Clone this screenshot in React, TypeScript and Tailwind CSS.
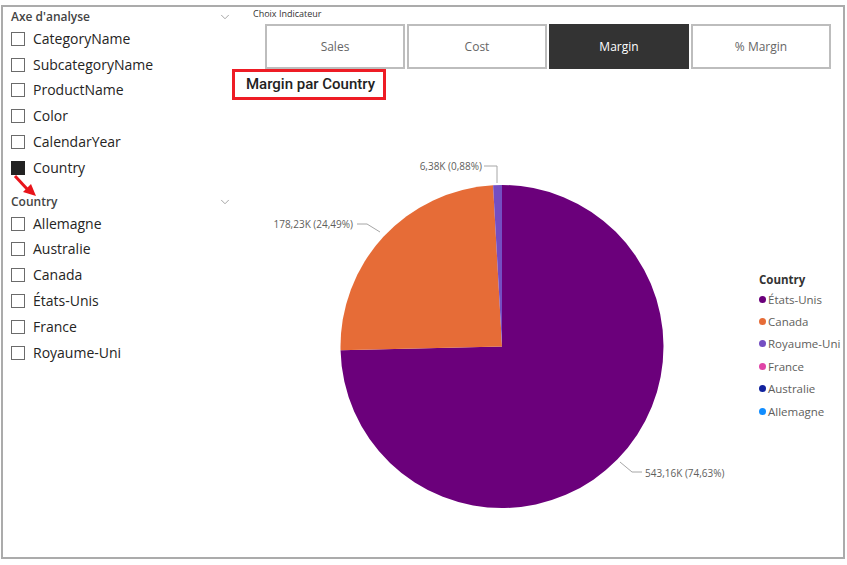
import { ChevronDown } from 'lucide-react';

const axes = ['CategoryName', 'SubcategoryName', 'ProductName', 'Color', 'CalendarYear', 'Country'];
const countries = ['Allemagne', 'Australie', 'Canada', 'États-Unis', 'France', 'Royaume-Uni'];
const indicators = ['Sales', 'Cost', 'Margin', '% Margin'];

const legend = [
    { name: 'États-Unis', color: '#6B007B' },
    { name: 'Canada', color: '#E66C37' },
    { name: 'Royaume-Uni', color: '#744EC2' },
    { name: 'France', color: '#E044A7' },
    { name: 'Australie', color: '#12239E' },
    { name: 'Allemagne', color: '#118DFF' },
];

function CheckRow({ label, checked }: { label: string; checked?: boolean }) {
    return (
        <div className="h-[25.8px] flex items-center gap-2">
            <span
                className={
                    checked
                        ? 'w-[14px] h-[14px] bg-[#222] border border-[#222]'
                        : 'w-[14px] h-[14px] border border-[#6b6b6b] bg-white'
                }
            />
            <span className="text-[14px] text-[#252423] leading-none">{label}</span>
        </div>
    );
}

function SlicerHeader({ title }: { title: string }) {
    return (
        <div className="h-[18px] flex items-center justify-between">
            <span className="text-[12px] font-semibold text-[#444]">{title}</span>
            <ChevronDown size={14} strokeWidth={1.3} className="text-[#8a8a8a]" />
        </div>
    );
}

function PieChart() {
    return (
        <svg width="526" height="456" viewBox="0 0 526 456" className="shrink-0">
            <path d="M270,246.5 L270,85 A161.5,161.5 0 1 1 108.54,250.25 Z" fill="#6B007B" />
            <path d="M270,246.5 L108.54,250.25 A161.5,161.5 0 0 1 261.07,85.25 Z" fill="#E66C37" />
            <path d="M270,246.5 L261.07,85.25 A161.5,161.5 0 0 1 270,85 Z" fill="#744EC2" />

            <g fill="none" stroke="#a6a6a6" strokeWidth="1">
                <polyline points="252,66 265,66 265,83" />
                <polyline points="125,124 135,124 148,132" />
                <polyline points="388,362 400,372 410,372" />
            </g>
            <g fill="#605e5c" fontSize="10">
                <text x="250" y="70" textAnchor="end">6,38K (0,88%)</text>
                <text x="121" y="128" textAnchor="end">178,23K (24,49%)</text>
                <text x="413" y="377">543,16K (74,63%)</text>
            </g>
        </svg>
    );
}

export default function App() {
    return (
        <div className="w-[847px] h-[565px] bg-white pt-[5px] pl-[1px] font-['Open_Sans',sans-serif]">
            <div className="w-[844px] h-[554px] border-2 border-[#ababab] flex overflow-hidden">
                {/* slicers */}
                <div className="relative w-[229px] shrink-0 pt-[1px] pl-[8px]">
                    <SlicerHeader title="Axe d'analyse" />
                    {axes.map((a) => (
                        <CheckRow key={a} label={a} checked={a === 'Country'} />
                    ))}
                    <div className="mt-[12px]">
                        <SlicerHeader title="Country" />
                    </div>
                    {countries.map((c) => (
                        <CheckRow key={c} label={c} />
                    ))}

                    <svg className="absolute left-[6px] top-[164px]" width="36" height="36" viewBox="0 0 36 36">
                        <line x1="6" y1="5" x2="19" y2="19" stroke="#e8141b" strokeWidth="3" />
                        <polygon points="27,25 14,21 22,13" fill="#e8141b" />
                    </svg>
                </div>

                {/* report area */}
                <div className="flex-1 flex flex-col">
                    <div className="h-[14px] pl-[21px] flex items-center text-[9px] text-[#333]">Choix Indicateur</div>
                    <div className="mt-[3px] pl-[33px] flex gap-[2px]">
                        {indicators.map((i) => (
                            <div
                                key={i}
                                className={
                                    i === 'Margin'
                                        ? 'w-[140px] h-[45px] flex items-center justify-center bg-[#333] border border-[#333] text-white text-[12px]'
                                        : 'w-[140px] h-[45px] flex items-center justify-center bg-white border-2 border-[#bdbdbd] text-[#666] text-[12px]'
                                }
                            >
                                {i}
                            </div>
                        ))}
                    </div>
                    <div className="w-[154px] h-[31px] border-[3px] border-[#ee1c25] flex items-center pl-[11px]">
                        <span className="font-['Roboto',sans-serif] font-medium text-[15px] text-[#222]">Margin par Country</span>
                    </div>

                    <div className="flex-1 flex">
                        <PieChart />
                        <div className="pt-[172px] pl-[1px]">
                            <div className="h-[16px] flex items-center text-[11.5px] font-bold text-[#333]">Country</div>
                            {legend.map((l) => (
                                <div key={l.name} className="h-[22.4px] flex items-center gap-[2px] whitespace-nowrap">
                                    <span className="w-[7px] h-[7px] rounded-full" style={{ backgroundColor: l.color }} />
                                    <span className="text-[11.5px] text-[#605e5c]">{l.name}</span>
                                </div>
                            ))}
                        </div>
                    </div>
                </div>
            </div>
        </div>
    );
}
